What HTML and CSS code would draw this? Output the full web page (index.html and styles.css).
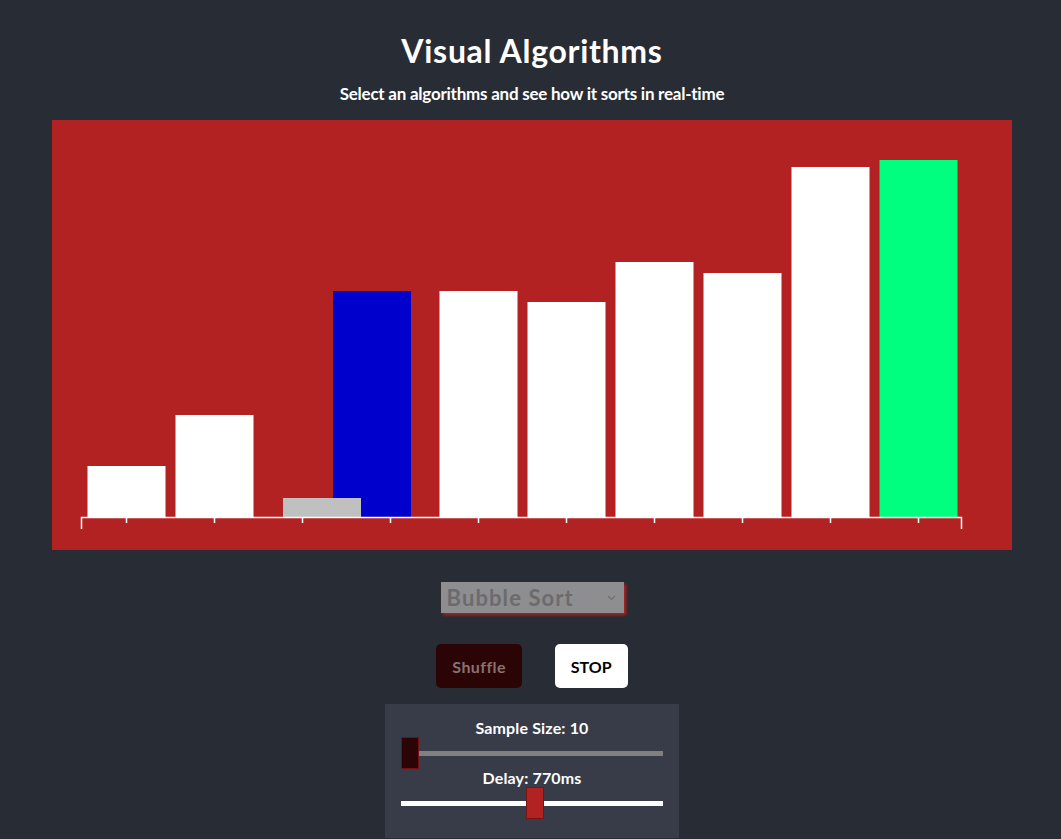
FILE: index.html
```html
<!DOCTYPE html>
<html>
<head>
<meta charset="utf-8">
<link rel="stylesheet" href="styles.css">
</head>
<body>
<div class="app">
  <h1 class="title">Visual Algorithms</h1>
  <p class="subtitle">Select an algorithms and see how it sorts in real-time</p>
  <svg class="chart" width="960" height="430" viewBox="0 0 960 430">
    <rect class="bar" x="35.5" y="346" width="78" height="51"/>
    <rect class="bar" x="123.5" y="295" width="78" height="102"/>
    <rect class="bar" x="387.5" y="171" width="78" height="226"/>
    <rect class="bar" x="475.5" y="182" width="78" height="215"/>
    <rect class="bar" x="563.5" y="142" width="78" height="255"/>
    <rect class="bar" x="651.5" y="153" width="78" height="244"/>
    <rect class="bar" x="739.5" y="47" width="78" height="350"/>
    <rect class="bar bar-sorted" x="827.5" y="40" width="78" height="357"/>
    <rect class="bar bar-compare" x="281" y="171" width="78" height="226"/>
    <rect class="bar bar-swap" x="231" y="378" width="78" height="19"/>
    <g class="axis">
      <path d="M29.5,409V397.5H909.5V409"/>
      <path d="M74.5,397.5V403 M162.5,397.5V403 M250.5,397.5V403 M338.5,397.5V403 M426.5,397.5V403 M514.5,397.5V403 M602.5,397.5V403 M690.5,397.5V403 M778.5,397.5V403 M866.5,397.5V403"/>
    </g>
  </svg>
  <div class="select">
    <span class="select-label">Bubble Sort</span>
    <svg class="chevron" width="9" height="6" viewBox="0 0 9 6"><path d="M1 1l3.5 3.5L8 1"/></svg>
  </div>
  <div class="buttons">
    <button class="btn btn-shuffle">Shuffle</button>
    <button class="btn btn-stop">STOP</button>
  </div>
  <div class="panel">
    <label class="panel-label">Sample Size: 10</label>
    <input class="range range-size" type="range" min="10" max="100" value="10">
    <label class="panel-label">Delay: 770ms</label>
    <input class="range range-delay" type="range" min="0" max="1500" value="770">
  </div>
</div>
</body>
</html>
```
FILE: styles.css
```css
html, body {
  margin: 0;
  padding: 0;
  background: #282c34;
}
body {
  font-family: "Lato", "Liberation Sans", sans-serif;
  color: #ffffff;
}
.app {
  display: flex;
  flex-direction: column;
  align-items: center;
  padding-left: 3px;
  height: 839px;
  overflow: hidden;
}
.title {
  margin: 31px 0 0;
  font-size: 32px;
  line-height: 40px;
  font-weight: 700;
  letter-spacing: 0.7px;
}
.subtitle {
  margin: 12px 0 0;
  font-size: 17px;
  line-height: 22px;
  font-weight: 700;
  letter-spacing: -0.24px;
}
.chart {
  display: block;
  margin-top: 15px;
  background: #b22222;
}
.bar { fill: #ffffff; }
.bar-sorted { fill: #00ff7f; }
.bar-compare { fill: #0000cd; }
.bar-swap { fill: #c0c0c0; }
.axis path {
  fill: none;
  stroke: #ffffff;
  stroke-width: 1.5;
}
.select {
  margin-top: 32px;
  width: 183px;
  height: 31px;
  box-sizing: border-box;
  padding: 0 8px 0 6px;
  display: flex;
  align-items: center;
  justify-content: space-between;
  background: #8e8e91;
  box-shadow: 2px 2px 3px #b22222;
}
.select-label {
  font-size: 22px;
  font-weight: 700;
  color: #6b6b6e;
  line-height: 31px;
  letter-spacing: 1.1px;
}
.chevron path {
  fill: none;
  stroke: #6f6f72;
  stroke-width: 1.2;
}
.buttons {
  margin-top: 31px;
  display: flex;
  gap: 33px;
}
.btn {
  height: 44px;
  padding: 0 16px;
  border: none;
  border-radius: 5px;
  font-family: "Lato", "Liberation Sans", sans-serif;
  font-size: 16px;
  font-weight: 700;
}
.btn-shuffle {
  background: #2b0505;
  color: #8a7171;
  letter-spacing: 0.4px;
}
.btn-stop {
  background: #ffffff;
  color: #000000;
}
.panel {
  margin-top: 16px;
  width: 294px;
  padding: 14px 16px 20px;
  box-sizing: border-box;
  background: #373c48;
  display: flex;
  flex-direction: column;
  align-items: center;
}
.panel-label {
  font-size: 16px;
  line-height: 20px;
  font-weight: 700;
  letter-spacing: 0.15px;
}
.range {
  -webkit-appearance: none;
  appearance: none;
  width: 262px;
  height: 30px;
  margin: 0;
  background: transparent;
}
.range::-webkit-slider-runnable-track {
  height: 5px;
  background: #808080;
}
.range-delay::-webkit-slider-runnable-track {
  background: #ffffff;
}
.range::-webkit-slider-thumb {
  -webkit-appearance: none;
  appearance: none;
  width: 18px;
  height: 32px;
  margin-top: -13.5px;
  box-sizing: border-box;
  border: 1px solid #7a0f0f;
  background: #2b0505;
}
.range-delay::-webkit-slider-thumb {
  background: #b22222;
  border-color: #7a1414;
}
```
